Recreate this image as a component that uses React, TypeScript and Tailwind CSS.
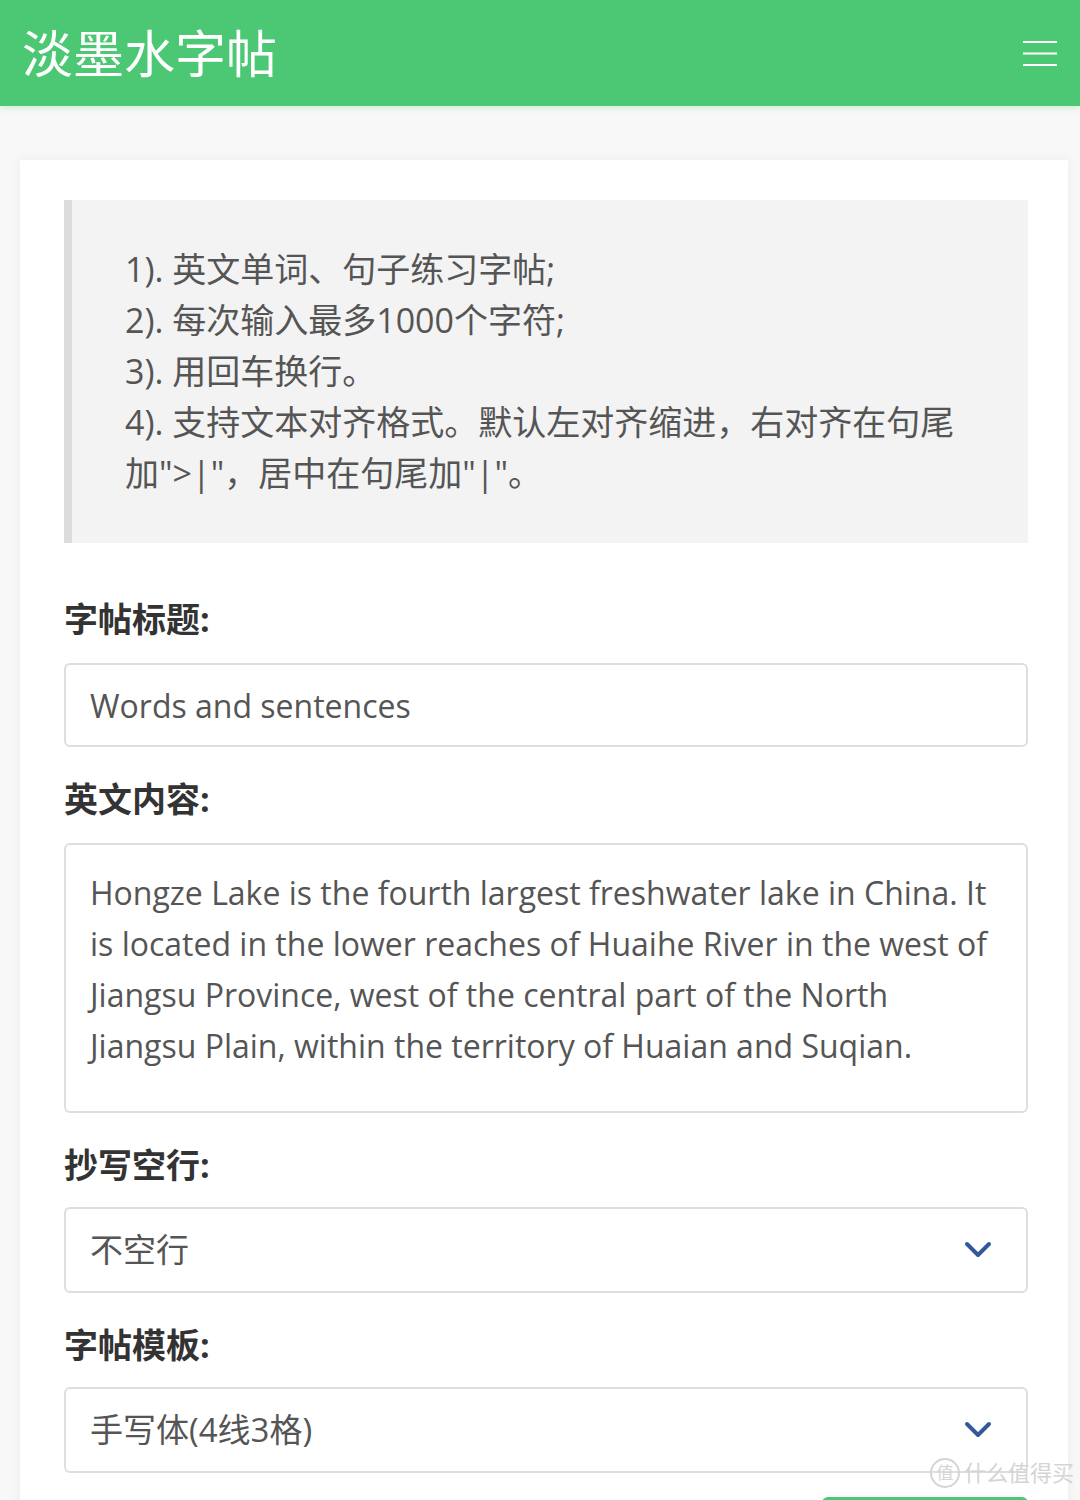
import React from 'react';

const cjk = { fontFamily: '"Open Sans", "Noto Sans CJK SC", sans-serif' };

const Chevron = () => (
  <svg className="h-[18px] w-[28px] text-[#33599a]" viewBox="0 0 28 18" fill="none" stroke="currentColor" strokeWidth={4} strokeLinecap="round" strokeLinejoin="round">
    <path d="M3 3l11 11 11-11" />
  </svg>
);

const Label = ({ children }: { children: React.ReactNode }) => (
  <label className="block text-[34px] font-bold leading-[48px] text-[#333]">{children}</label>
);

const Select = ({ value }: { value: string }) => (
  <div className="flex h-[86px] items-center justify-between rounded-md border-2 border-[#dedede] bg-white pl-6 pr-[34px] text-[33px] text-[#555]">
    <span>{value}</span>
    <Chevron />
  </div>
);

const App: React.FC = () => {
  const content =
    'Hongze Lake is the fourth largest freshwater lake in China. It is located in the lower reaches of Huaihe River in the west of Jiangsu Province, west of the central part of the North Jiangsu Plain, within the territory of Huaian and Suqian.';

  return (
    <div className="relative h-[1500px] overflow-hidden bg-[#f8f8f8]" style={cjk}>
      <header className="flex h-[106px] items-center justify-between bg-[#4cc774] pl-[22px] pr-[22px] shadow-[0_2px_6px_rgba(76,199,116,0.25)]">
        <h1 className="text-[51px] font-normal text-white">淡墨水字帖</h1>
        <svg className="h-[27px] w-[36px] text-white" viewBox="0 0 36 27" fill="none" stroke="currentColor" strokeWidth={2}>
          <path d="M1 2h34M1 13.5h34M1 25h34" />
        </svg>
      </header>

      <main className="mt-[54px] ml-[20px] mr-[12px] bg-white pl-[44px] pr-[40px] pt-[40px] pb-10 shadow-[0_0_12px_rgba(0,0,0,0.05)]">
        <blockquote className="border-l-[8px] border-[#dcdcdc] bg-[#f3f3f3] pt-[44px] pb-[44px] pl-[53px] pr-10 text-[34px] leading-[51px] text-[#555]">
          <p>1). 英文单词、句子练习字帖;</p>
          <p>2). 每次输入最多1000个字符;</p>
          <p>3). 用回车换行。</p>
          <p>4). 支持文本对齐格式。默认左对齐缩进，右对齐在句尾加"&gt;|"，居中在句尾加"|"。</p>
        </blockquote>

        <div className="mt-[52px]">
          <Label>字帖标题:</Label>
          <input
            readOnly
            value="Words and sentences"
            className="mt-[20px] h-[84px] w-full rounded-md border-2 border-[#dedede] bg-white px-6 text-[32px] text-[#555] outline-none"
            style={cjk}
          />
        </div>

        <div className="mt-[28px]">
          <Label>英文内容:</Label>
          <textarea
            readOnly
            value={content}
            className="mt-[20px] block h-[270px] w-full resize-none rounded-md border-2 border-[#dedede] bg-white px-6 pt-[22px] text-[32px] leading-[51px] text-[#555] outline-none"
            style={cjk}
          />
        </div>

        <div className="mt-[28px]">
          <Label>抄写空行:</Label>
          <div className="mt-[18px]">
            <Select value="不空行" />
          </div>
        </div>

        <div className="mt-[28px]">
          <Label>字帖模板:</Label>
          <div className="mt-[18px]">
            <Select value="手写体(4线3格)" />
          </div>
        </div>

        <div className="mt-[24px] flex justify-end">
          <div className="h-[60px] w-[206px] rounded-md bg-[#4cc774]" />
        </div>
      </main>

      <div className="absolute top-[1456px] right-[6px] flex items-center gap-1 text-[22px] text-[#d4d4d4]">
        <span className="flex h-[30px] w-[30px] items-center justify-center rounded-full border-2 border-[#d4d4d4] text-[17px]">值</span>
        <span>什么值得买</span>
      </div>
    </div>
  );
};

export default App;
